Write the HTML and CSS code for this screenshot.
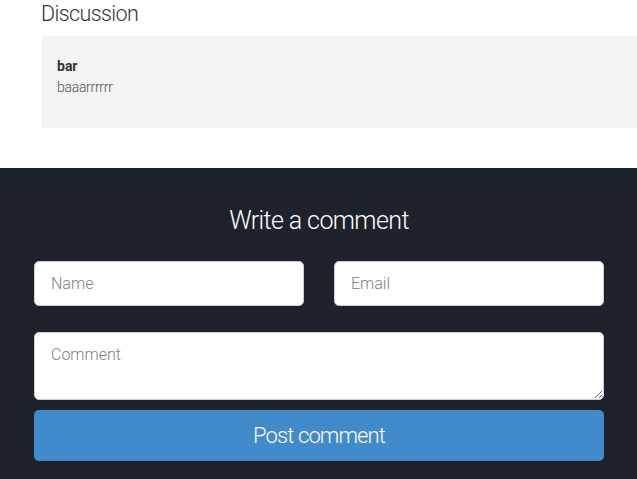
FILE: index.html
```html
<!DOCTYPE html>
<html>
<head>
<meta charset="utf-8">
<link rel="stylesheet" href="styles.css">
</head>
<body>
<section class="discussion">
  <h2 class="discussion-title">Discussion</h2>
  <div class="comment-card">
    <div class="comment-author">bar</div>
    <div class="comment-body">baaarrrrrr</div>
  </div>
</section>
<section class="write">
  <div class="write-inner">
    <h2 class="write-title">Write a comment</h2>
    <form class="comment-form">
      <div class="row">
        <input class="field" type="text" placeholder="Name">
        <input class="field" type="email" placeholder="Email">
      </div>
      <textarea class="field area" placeholder="Comment"></textarea>
      <button class="submit" type="button">Post comment</button>
    </form>
  </div>
</section>
</body>
</html>
```
FILE: styles.css
```css
html, body {
  margin: 0;
  padding: 0;
  height: 100%;
  background: #ffffff;
  font-family: Roboto, "Liberation Sans", sans-serif;
  overflow: hidden;
}

.discussion {
  padding: 2px 0 40px 42px;
}

.discussion-title {
  margin: 0 0 10px -1px;
  font-size: 21.5px;
  line-height: 24px;
  font-weight: 300;
  letter-spacing: -0.6px;
  color: #333;
}

.comment-card {
  background: #f3f3f3;
  padding: 20px 15px 30px;
  height: 42px;
}

.comment-author {
  font-size: 14px;
  line-height: 20px;
  font-weight: 700;
  color: #333;
}

.comment-body {
  font-size: 14px;
  line-height: 22px;
  font-weight: 300;
  letter-spacing: -0.3px;
  color: #555;
}

.write {
  background: #1e232b;
  padding: 38px 0 18px;
  min-height: 311px;
  box-sizing: border-box;
}

.write-inner {
  width: 570px;
  margin-left: 34px;
}

.write-title {
  margin: 0 0 25px;
  text-align: center;
  font-size: 25px;
  line-height: 30px;
  font-weight: 300;
  letter-spacing: -0.6px;
  color: #fff;
}

.comment-form {
  display: flex;
  flex-direction: column;
}

.row {
  display: grid;
  grid-template-columns: 1fr 1fr;
  column-gap: 30px;
  margin-bottom: 26px;
}

.field {
  box-sizing: border-box;
  height: 45px;
  border: 1px solid #cccccc;
  border-radius: 5px;
  background: #fff;
  padding: 0 16px;
  font-family: Roboto, "Liberation Sans", sans-serif;
  font-size: 16px;
  font-weight: 300;
  color: #555;
  outline: none;
  width: 100%;
}

.field::placeholder {
  color: #808080;
  opacity: 1;
}

.area {
  height: 68px;
  padding: 11px 16px;
  line-height: 22px;
  resize: vertical;
  margin-bottom: 10px;
  display: block;
}

.submit {
  height: 51px;
  border: none;
  border-radius: 5px;
  background: #428bca;
  color: #fff;
  font-family: Roboto, "Liberation Sans", sans-serif;
  font-size: 22px;
  font-weight: 300;
  letter-spacing: -0.9px;
  padding: 0;
  width: 100%;
}
```
